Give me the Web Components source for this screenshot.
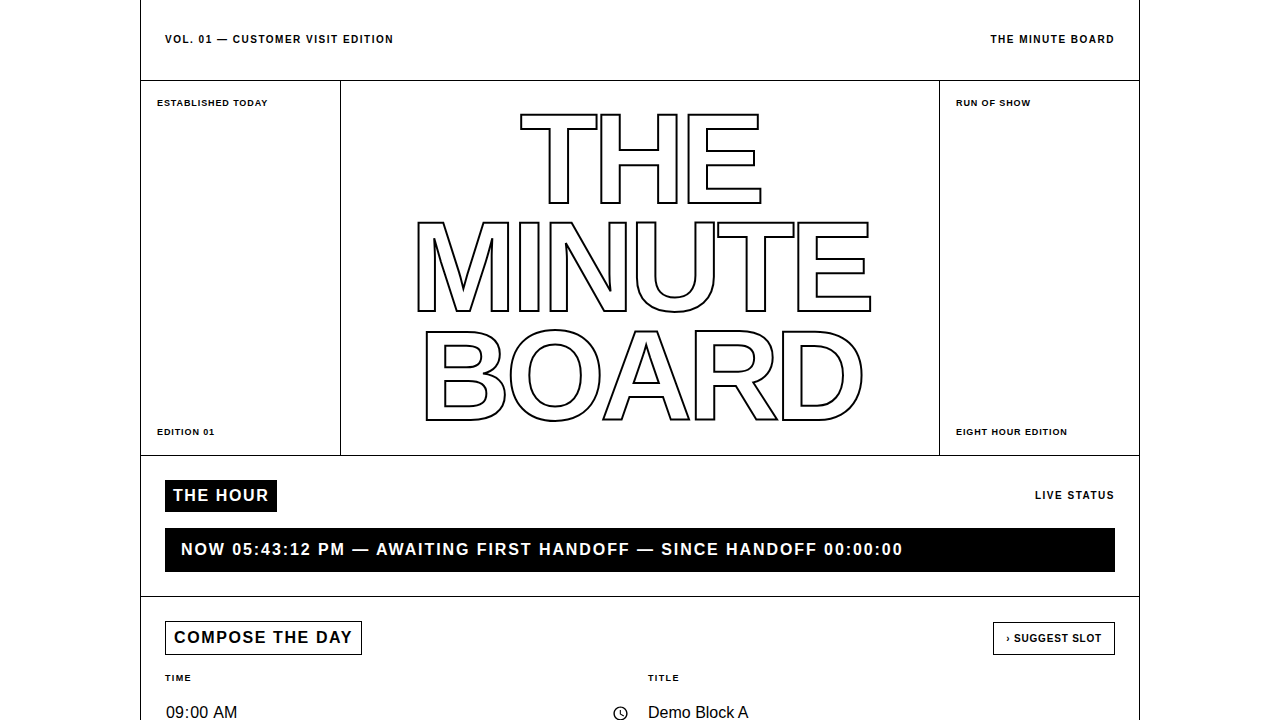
<!DOCTYPE html>
<html lang="en">
<head>
<meta charset="utf-8">
<meta name="viewport" content="width=device-width, initial-scale=1">
<title>The Minute Board</title>
<style>
  html { scrollbar-width: none; }
  body {
    margin: 0;
    background: #fff;
    color: #000;
    font-family: "Liberation Sans", Arial, Helvetica, sans-serif;
    font-size: 16px;
    line-height: 24px;
  }
</style>
</head>
<body>
<minute-board>
  <board-topbar>
    <span slot="start">VOL. 01 — CUSTOMER VISIT EDITION</span>
    <span slot="end">THE MINUTE BOARD</span>
  </board-topbar>
  <board-masthead>
    <span slot="top-left">ESTABLISHED TODAY</span>
    <span slot="bottom-left">EDITION 01</span>
    THE MINUTE BOARD
    <span slot="top-right">RUN OF SHOW</span>
    <span slot="bottom-right">EIGHT HOUR EDITION</span>
  </board-masthead>
  <board-section heading="THE HOUR" variant="solid">
    <board-note slot="aside">LIVE STATUS</board-note>
    <status-bar>NOW 05:43:12 PM — AWAITING FIRST HANDOFF — SINCE HANDOFF 00:00:00</status-bar>
  </board-section>
  <board-section heading="COMPOSE THE DAY">
    <board-button slot="aside">› SUGGEST SLOT</board-button>
    <field-row>
      <board-field label="TIME" type="time" value="09:00"></board-field>
      <board-field label="TITLE" type="text" value="Demo Block A"></board-field>
    </field-row>
  </board-section>
</minute-board>

<script>
  const define = (name, render) => {
    customElements.define(name, class extends HTMLElement {
      constructor() {
        super();
        this.attachShadow({ mode: "open" });
      }
      connectedCallback() {
        this.shadowRoot.innerHTML = render(this);
      }
    });
  };

  define("minute-board", () => `
    <style>
      :host {
        display: block;
        box-sizing: border-box;
        max-width: 1000px;
        min-height: 100vh;
        margin: 0 auto;
        border: solid #000;
        border-width: 0 1px;
      }
    </style>
    <main><slot></slot></main>`);

  define("board-topbar", () => `
    <style>
      :host { display: block; border-bottom: 1px solid #000; }
      header {
        display: flex;
        justify-content: space-between;
        gap: 16px;
        padding: 32px 24px;
        font-size: 10px;
        font-weight: 700;
        line-height: 16px;
        letter-spacing: 0.15em;
      }
    </style>
    <header><slot name="start"></slot><slot name="end"></slot></header>`);

  define("board-masthead", () => `
    <style>
      :host {
        display: grid;
        grid-template-columns: 200px minmax(0, 1fr) 200px;
        border-bottom: 1px solid #000;
      }
      .ear {
        display: flex;
        flex-direction: column;
        justify-content: space-between;
        padding: 16px;
        font-size: 9px;
        font-weight: 700;
        line-height: 13px;
        letter-spacing: 0.1em;
      }
      .left { border-right: 1px solid #000; }
      .right { border-left: 1px solid #000; }
      h1 {
        margin: 0;
        padding: 24px 24px 25px;
        font-size: 128px;
        font-weight: 700;
        line-height: 0.847;
        letter-spacing: -0.04em;
        text-align: center;
        color: transparent;
        -webkit-text-stroke: 2px #000;
      }
    </style>
    <div class="ear left"><slot name="top-left"></slot><slot name="bottom-left"></slot></div>
    <h1><slot></slot></h1>
    <div class="ear right"><slot name="top-right"></slot><slot name="bottom-right"></slot></div>`);

  define("board-section", (el) => `
    <style>
      :host { display: block; border-bottom: 1px solid #000; }
      section { display: grid; gap: 16px; padding: 24px; }
      .head { display: flex; justify-content: space-between; align-items: center; }
      h2 {
        margin: 0;
        padding: 4px 8px;
        font-size: 16px;
        font-weight: 700;
        line-height: 24px;
        letter-spacing: 0.1em;
        border: 1px solid #000;
      }
      :host([variant="solid"]) h2 { border: 0; background: #000; color: #fff; }
    </style>
    <section>
      <div class="head"><h2>${el.getAttribute("heading")}</h2><slot name="aside"></slot></div>
      <slot></slot>
    </section>`);

  define("board-note", () => `
    <style>
      :host {
        display: block;
        font-size: 10px;
        font-weight: 700;
        line-height: 16px;
        letter-spacing: 0.15em;
      }
    </style>
    <slot></slot>`);

  define("status-bar", () => `
    <style>
      :host {
        display: block;
        padding: 12px 16px;
        background: #000;
        color: #fff;
        font-weight: 700;
        line-height: 20px;
        letter-spacing: 0.12em;
      }
    </style>
    <slot></slot>`);

  define("board-button", () => `
    <style>
      :host { display: block; }
      button {
        display: block;
        margin: 0;
        padding: 8px 12px;
        border: 1px solid #000;
        border-radius: 0;
        background: #fff;
        color: #000;
        font: 700 10px/15px "Liberation Sans", Arial, sans-serif;
        letter-spacing: 0.08em;
        cursor: pointer;
      }
      button:hover { background: #000; color: #fff; }
    </style>
    <button type="button"><slot></slot></button>`);

  define("field-row", () => `
    <style>
      :host {
        display: grid;
        grid-template-columns: repeat(auto-fit, minmax(280px, 1fr));
        gap: 16px;
      }
    </style>
    <slot></slot>`);

  define("board-field", (el) => `
    <style>
      :host { display: grid; gap: 8px; }
      label {
        font-size: 9px;
        font-weight: 700;
        line-height: 14px;
        letter-spacing: 0.15em;
      }
      input {
        box-sizing: border-box;
        width: 100%;
        height: 41px;
        margin: 0;
        padding: 8px 0;
        border: 0;
        border-bottom: 1px solid #000;
        border-radius: 0;
        background: transparent;
        color: #000;
        font: 16px "Liberation Sans", Arial, sans-serif;
      }
    </style>
    <label for="control">${el.getAttribute("label")}</label>
    <input id="control" type="${el.getAttribute("type")}" value="${el.getAttribute("value")}">`);
</script>
</body>
</html>
